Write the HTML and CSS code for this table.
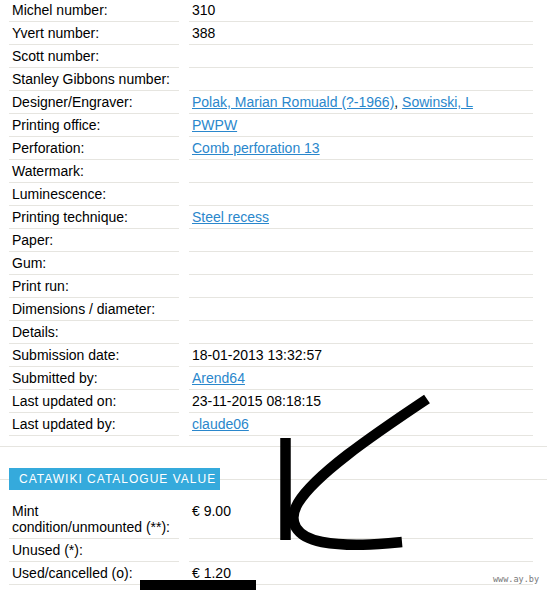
FILE: index.html
```html
<!DOCTYPE html>
<html>
<head>
<meta charset="utf-8">
<link rel="stylesheet" href="styles.css">
</head>
<body>
<div class="page">
  <div class="details">
    <div class="k">Michel number:</div><div class="v">310</div>
    <div class="k">Yvert number:</div><div class="v">388</div>
    <div class="k">Scott number:</div><div class="v"></div>
    <div class="k">Stanley Gibbons number:</div><div class="v"></div>
    <div class="k">Designer/Engraver:</div><div class="v"><a href="#">Polak, Marian Romuald (?-1966)</a>, <a href="#">Sowinski, L</a></div>
    <div class="k">Printing office:</div><div class="v"><a href="#">PWPW</a></div>
    <div class="k">Perforation:</div><div class="v"><a href="#">Comb perforation 13</a></div>
    <div class="k">Watermark:</div><div class="v"></div>
    <div class="k">Luminescence:</div><div class="v"></div>
    <div class="k">Printing technique:</div><div class="v"><a href="#">Steel recess</a></div>
    <div class="k">Paper:</div><div class="v"></div>
    <div class="k">Gum:</div><div class="v"></div>
    <div class="k">Print run:</div><div class="v"></div>
    <div class="k">Dimensions / diameter:</div><div class="v"></div>
    <div class="k">Details:</div><div class="v"></div>
    <div class="k">Submission date:</div><div class="v">18-01-2013 13:32:57</div>
    <div class="k">Submitted by:</div><div class="v"><a href="#">Arend64</a></div>
    <div class="k">Last updated on:</div><div class="v">23-11-2015 08:18:15</div>
    <div class="k">Last updated by:</div><div class="v"><a href="#">claude06</a></div>
  </div>
  <div class="divider"></div>
  <div class="section-head"><span class="badge">CATAWIKI CATALOGUE VALUE</span></div>
  <div class="details values">
    <div class="k">Mint<br>condition/unmounted (**):</div><div class="v">€ 9.00</div>
    <div class="k">Unused (*):</div><div class="v"></div>
    <div class="k">Used/cancelled (o):</div><div class="v">€ 1.20</div>
  </div>
</div>
<svg class="scribble" width="547" height="590" viewBox="0 0 547 590" xmlns="http://www.w3.org/2000/svg">
  <path d="M285.5 438 V540" stroke="#000" stroke-width="10.5" fill="none"/>
  <path d="M427 399 C370 437 315 475 298 503 C287 522 296 537 322 542 C350 547 380 544 402 542" stroke="#000" stroke-width="10.5" fill="none"/>
  <rect x="140" y="580" width="116" height="10" fill="#000"/>
</svg>
<div class="watermark">www.ay.by</div>
</body>
</html>
```
FILE: styles.css
```css
html, body {
  margin: 0;
  padding: 0;
  background: #fff;
}
body {
  font-family: "Liberation Sans", Arial, Helvetica, sans-serif;
  font-size: 14px;
  color: #000;
  width: 547px;
  height: 590px;
  overflow: hidden;
  position: relative;
}
.page {
  display: flex;
  flex-direction: column;
}
.details {
  display: grid;
  grid-template-columns: 170px 344px;
  column-gap: 10px;
  margin: -1px 0 0 9px;
}
.k, .v {
  padding: 3px 3px;
  line-height: 16px;
  border-bottom: 1px solid #e6e5e0;
  min-height: 16px;
}
a {
  color: #2a87cc;
  text-decoration: underline;
}
.divider {
  margin-top: 10px;
  height: 1px;
  background: #e6e5e0;
}
.section-head {
  margin-top: 21px;
  padding-left: 9px;
  display: flex;
  background: linear-gradient(#e6e5e0, #e6e5e0) 0 11px / 100% 1px no-repeat;
}
.badge {
  background: #35aadc;
  color: #fff;
  height: 22px;
  line-height: 22px;
  padding: 0 10px;
  font-size: 12px;
  letter-spacing: 1px;
  width: 191px;
  white-space: nowrap;
}
.values {
  margin-top: 10px;
}
.scribble {
  position: absolute;
  left: 0;
  top: 0;
}
.watermark {
  position: absolute;
  left: 493px;
  top: 574px;
  font-family: "DejaVu Sans Mono", monospace;
  font-size: 8.5px;
  color: #777;
}
```
